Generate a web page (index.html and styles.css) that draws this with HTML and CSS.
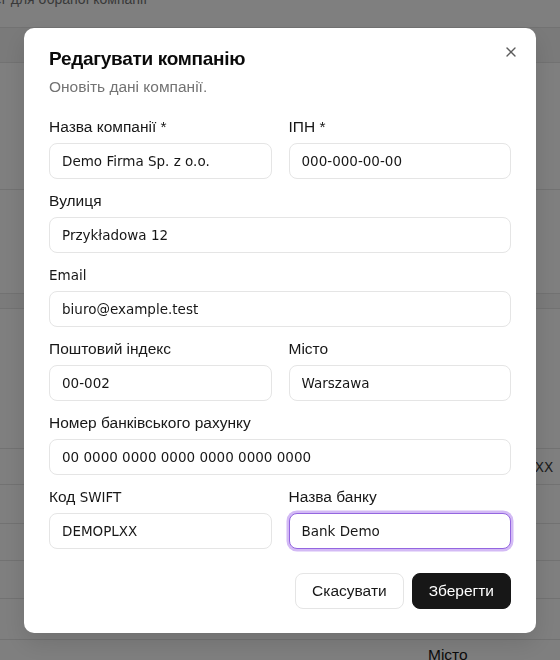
FILE: index.html
```html
<!DOCTYPE html>
<html lang="uk">
<head>
<meta charset="utf-8">
<title>Редагувати компанію</title>
<link rel="stylesheet" href="styles.css">
</head>
<body>
<div class="page">
  <p class="page-note">ег для обраної компанії</p>
  <div class="rows">
    <div class="row row-top"></div>
    <div class="row row-head"></div>
    <div class="row row-a"></div>
    <div class="row row-b"></div>
    <div class="row row-band"></div>
    <div class="row row-c"></div>
    <div class="row row-d"><span class="cell-text">DEMOPLXX</span></div>
    <div class="row row-e"></div>
    <div class="row row-f"></div>
    <div class="row row-g"></div>
    <div class="row row-h"></div>
    <div class="row row-i"><span class="cell-label">Місто</span></div>
  </div>
</div>

<div class="overlay">
  <div class="dialog" role="dialog">
    <button class="close" type="button" aria-label="Закрити">
      <svg viewBox="0 0 24 24" width="16" height="16" fill="none" stroke="currentColor" stroke-width="2" stroke-linecap="round" stroke-linejoin="round"><path d="M18 6 6 18"/><path d="m6 6 12 12"/></svg>
    </button>
    <div class="dialog-header">
      <h2 class="dialog-title">Редагувати компанію</h2>
      <p class="dialog-desc">Оновіть дані компанії.</p>
    </div>
    <form class="form-grid">
      <div class="field">
        <label class="label">Назва компанії *</label>
        <div class="input">Demo Firma Sp. z o.o.</div>
      </div>
      <div class="field">
        <label class="label">ІПН *</label>
        <div class="input">000-000-00-00</div>
      </div>
      <div class="field span-2">
        <label class="label">Вулиця</label>
        <div class="input">Przykładowa 12</div>
      </div>
      <div class="field span-2">
        <label class="label"><span class="latin">Email</span></label>
        <div class="input">biuro@example.test</div>
      </div>
      <div class="field">
        <label class="label">Поштовий індекс</label>
        <div class="input">00-002</div>
      </div>
      <div class="field">
        <label class="label">Місто</label>
        <div class="input">Warszawa</div>
      </div>
      <div class="field span-2">
        <label class="label">Номер банківського рахунку</label>
        <div class="input">00 0000 0000 0000 0000 0000 0000</div>
      </div>
      <div class="field">
        <label class="label">Код <span class="latin">SWIFT</span></label>
        <div class="input">DEMOPLXX</div>
      </div>
      <div class="field">
        <label class="label">Назва банку</label>
        <div class="input is-focused">Bank Demo</div>
      </div>
    </form>
    <div class="dialog-footer">
      <button class="btn btn-outline" type="button">Скасувати</button>
      <button class="btn btn-primary" type="button">Зберегти</button>
    </div>
  </div>
</div>
</body>
</html>
```

FILE: styles.css
```css
* { box-sizing: border-box; }

html, body {
  margin: 0;
  padding: 0;
  height: 100%;
  overflow: hidden;
  background: #ffffff;
  font-family: "Liberation Sans", Arial, sans-serif;
  color: #171717;
}

/* background page */
.page {
  width: 560px;
}

.page-note {
  margin: -11px 0 0 -6px;
  height: 20px;
  font-size: 14px;
  line-height: 20px;
  color: #737373;
  white-space: nowrap;
}

.rows {
  display: flex;
  flex-direction: column;
}

.row {
  border-bottom: 1px solid #e5e5e5;
  display: flex;
  align-items: center;
  flex-shrink: 0;
}

.row-top { height: 19px; }
.row-head { height: 35px; background: #f4f4f4; }
.row-a { height: 127px; }
.row-b { height: 104px; }
.row-band { height: 15px; background: #f6f6f6; }
.row-c { height: 140px; }
.row-d { height: 36px; }
.row-e { height: 39px; }
.row-f { height: 37px; }
.row-g { height: 38px; }
.row-h { height: 41px; }
.row-i { height: 40px; align-items: flex-start; }

.cell-text {
  margin-left: 478px;
  font-family: "DejaVu Sans", sans-serif;
  font-size: 13.5px;
  color: #3a3a3a;
  white-space: nowrap;
}

.cell-label {
  margin: 6px 0 0 428px;
  font-size: 15.5px;
  line-height: 18px;
  color: #171717;
}

/* overlay and dialog */
.overlay {
  position: fixed;
  inset: 0;
  background: rgba(0, 0, 0, 0.5);
  display: flex;
  align-items: center;
  justify-content: center;
}

.dialog {
  position: relative;
  width: 512px;
  background: #ffffff;
  border-radius: 10px;
  padding: 21px 25px 24px 25px;
  box-shadow: 0 10px 25px rgba(0, 0, 0, 0.12);
}

.close {
  position: absolute;
  top: 16px;
  right: 17px;
  width: 16px;
  height: 16px;
  padding: 0;
  border: 0;
  background: transparent;
  color: #171717;
  opacity: 0.7;
  display: flex;
}

.dialog-header {
  display: flex;
  flex-direction: column;
  gap: 8px;
}

.dialog-title {
  margin: 0;
  font-size: 19px;
  line-height: 20px;
  font-weight: 700;
  letter-spacing: -0.3px;
  color: #0a0a0a;
}

.dialog-desc {
  margin: 0;
  font-size: 15.5px;
  line-height: 20px;
  color: #737373;
}

.form-grid {
  margin-top: 20px;
  display: grid;
  grid-template-columns: 1fr 1fr;
  column-gap: 17px;
  row-gap: 12px;
}

.field {
  display: flex;
  flex-direction: column;
  gap: 6px;
}

.span-2 { grid-column: span 2; }

.label {
  font-size: 15.5px;
  line-height: 20px;
  color: #171717;
}

.latin {
  font-family: "DejaVu Sans", sans-serif;
  font-size: 13.5px;
}

.input {
  height: 36px;
  border: 1px solid #e5e5e5;
  border-radius: 8px;
  padding: 0 12px;
  display: flex;
  align-items: center;
  font-family: "DejaVu Sans", sans-serif;
  font-size: 13.5px;
  color: #171717;
  background: #ffffff;
}

.input.is-focused {
  border-color: #9466e0;
  box-shadow: 0 0 0 2.5px #d3baf5;
}

.dialog-footer {
  margin-top: 24px;
  display: flex;
  justify-content: flex-end;
  gap: 8px;
}

.btn {
  height: 36px;
  padding: 0 16px;
  border-radius: 8px;
  font-family: "Liberation Sans", Arial, sans-serif;
  font-size: 15.5px;
  line-height: 20px;
}

.btn-outline {
  background: #ffffff;
  border: 1px solid #e5e5e5;
  color: #171717;
}

.btn-primary {
  background: #171717;
  border: 1px solid #171717;
  color: #ffffff;
}
```
